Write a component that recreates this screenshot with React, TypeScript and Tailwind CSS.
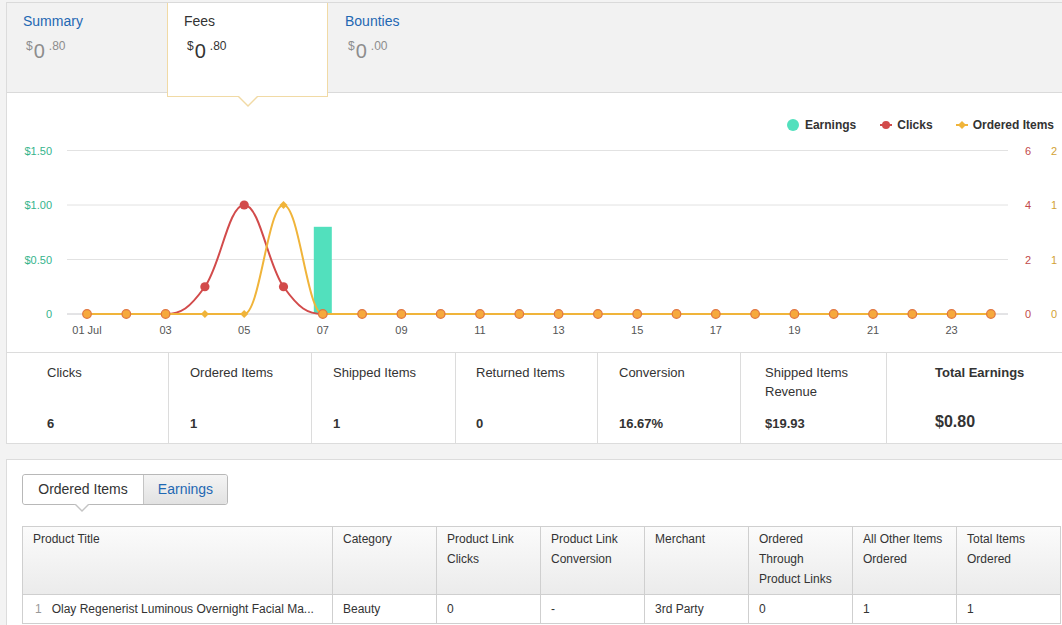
import React from 'react';

const clicks = [0, 0, 0, 1, 4, 1, 0, 0, 0, 0, 0, 0, 0, 0, 0, 0, 0, 0, 0, 0, 0, 0, 0, 0];
const ordered = [0, 0, 0, 0, 0, 1, 0, 0, 0, 0, 0, 0, 0, 0, 0, 0, 0, 0, 0, 0, 0, 0, 0, 0];
const X0 = 87;
const DX = 39.3;
const Y0 = 314;
const H = 163.5;
const xOf = (i: number) => X0 + i * DX;
const yClicks = (v: number) => Y0 - (v / 6) * H;
const yOrd = (v: number) => Y0 - (v / 1.5) * H;

type P = { x: number; y: number; rcx?: number; rcy?: number };

function spline(raw: [number, number][]) {
  const pts: P[] = raw.map(([x, y]) => ({ x, y }));
  const s = 1.5;
  const d = s + 1;
  let path = `M${pts[0].x},${pts[0].y}`;
  for (let i = 1; i < pts.length; i++) {
    const p = pts[i];
    const last = pts[i - 1];
    const next = pts[i + 1];
    let lcx = p.x;
    let lcy = p.y;
    if (next) {
      lcx = (s * p.x + last.x) / d;
      lcy = (s * p.y + last.y) / d;
      const rcx = (s * p.x + next.x) / d;
      let rcy = (s * p.y + next.y) / d;
      let corr = 0;
      if (rcx !== lcx) corr = ((rcy - lcy) * (rcx - p.x)) / (rcx - lcx) + p.y - rcy;
      lcy += corr;
      rcy += corr;
      if (lcy > last.y && lcy > p.y) {
        lcy = Math.max(last.y, p.y);
        rcy = 2 * p.y - lcy;
      } else if (lcy < last.y && lcy < p.y) {
        lcy = Math.min(last.y, p.y);
        rcy = 2 * p.y - lcy;
      }
      if (rcy > next.y && rcy > p.y) {
        rcy = Math.max(next.y, p.y);
        lcy = 2 * p.y - rcy;
      } else if (rcy < next.y && rcy < p.y) {
        rcy = Math.min(next.y, p.y);
        lcy = 2 * p.y - rcy;
      }
      p.rcx = rcx;
      p.rcy = rcy;
    }
    path += ` C${last.rcx ?? last.x},${last.rcy ?? last.y} ${lcx},${lcy} ${p.x},${p.y}`;
  }
  return path;
}

const RED = '#d24b4b';
const YEL = '#f0b43a';

function Diamond({ x, y, r = 4 }: { x: number; y: number; r?: number }) {
  return <polygon points={`${x},${y - r} ${x + r},${y} ${x},${y + r} ${x - r},${y}`} fill={YEL} />;
}

function Chart() {
  const redPath = spline(clicks.map((v, i) => [xOf(i), yClicks(v)]));
  const yelPath = spline(ordered.map((v, i) => [xOf(i), yOrd(v)]));
  const grid = [0, 1, 2, 3].map((k) => Y0 - (k * H) / 3);
  const leftLabels = ['0', '$0.50', '$1.00', '$1.50'];
  const redLabels = ['0', '2', '4', '6'];
  const yelLabels = ['0', '1', '1', '2'];
  return (
    <svg width={1055} height={212} viewBox="7 140 1055 212" className="block">
      {grid.map((y, k) => (
        <line key={k} x1={67} x2={1008} y1={y} y2={y} stroke={k === 0 ? '#c8c8cc' : '#e2e2e2'} strokeWidth={1} />
      ))}
      {grid.map((y, k) => (
        <text key={'l' + k} x={52} y={y + 4} textAnchor="end" fontSize={11} fill="#35b48c">
          {leftLabels[k]}
        </text>
      ))}
      {grid.map((y, k) => (
        <text key={'r' + k} x={1028} y={y + 4} textAnchor="middle" fontSize={11} fill="#c24a4a">
          {redLabels[k]}
        </text>
      ))}
      {grid.map((y, k) => (
        <text key={'y' + k} x={1051} y={y + 4} textAnchor="start" fontSize={11} fill="#d3a234">
          {yelLabels[k]}
        </text>
      ))}
      {clicks.map((_, i) =>
        i % 2 === 0 ? (
          <text key={'x' + i} x={xOf(i)} y={334} textAnchor="middle" fontSize={11} fill="#555">
            {i === 0 ? '01 Jul' : String(i + 1).padStart(2, '0')}
          </text>
        ) : null
      )}
      <rect x={xOf(6) - 9} y={yOrd(0.8)} width={18} height={Y0 - yOrd(0.8)} fill="#52e0bd" />
      <path d={redPath} fill="none" stroke={RED} strokeWidth={2} />
      <path d={yelPath} fill="none" stroke={YEL} strokeWidth={2} />
      {clicks.map((c, i) => {
        const o = ordered[i];
        const x = xOf(i);
        if (c === 0 && o === 0) {
          return <circle key={'m' + i} cx={x} cy={Y0} r={4.3} fill="#f6a93d" stroke="#e07640" strokeWidth={1.2} />;
        }
        return (
          <g key={'m' + i}>
            {c > 0 && <circle cx={x} cy={yClicks(c)} r={4.6} fill={RED} />}
            <Diamond x={x} y={yOrd(o)} />
          </g>
        );
      })}
    </svg>
  );
}

function Amount({ dim, cents }: { dim?: boolean; cents: string }) {
  const c = dim ? 'text-[#8d8d8d]' : 'text-[#333]';
  return (
    <div className={`flex items-start mt-[11px] ${c}`}>
      <span className="text-[12px] leading-[12px] mt-[0px] ml-[3px]">$</span>
      <span className="text-[20px] leading-[20px] mt-[1px] ml-[1px]">0</span>
      <span className="text-[12px] leading-[12px] ml-[4px]">{cents}</span>
    </div>
  );
}

function TabBar() {
  return (
    <div className="relative flex h-[91px] bg-[#f2f2f2] border-t border-b border-[#dadada]">
      <div className="w-[160px] pl-[16px] pt-[10px]">
        <div className="text-[14px] leading-[16px] text-[#1f68b3]">Summary</div>
        <Amount dim cents=".80" />
      </div>
      <div className="relative z-10 w-[161px] h-[94px] self-start bg-white border-x border-b border-[#f1daa5] pl-[16px] pt-[10px]">
        <div className="text-[14px] leading-[16px] text-[#333]">Fees</div>
        <Amount cents=".80" />
        <div className="absolute left-[69px] -bottom-[11px] w-0 h-0 border-x-[11px] border-x-transparent border-t-[11px] border-t-[#f1daa5]" />
        <div className="absolute left-[70px] -bottom-[9px] w-0 h-0 border-x-[10px] border-x-transparent border-t-[10px] border-t-white" />
      </div>
      <div className="w-[160px] pl-[17px] pt-[10px]">
        <div className="text-[14px] leading-[16px] text-[#1f68b3]">Bounties</div>
        <Amount dim cents=".00" />
      </div>
    </div>
  );
}

function Legend() {
  return (
    <div className="flex justify-end items-center h-[47px] pt-[16px] pr-[22px] text-[12px] font-bold text-[#333]">
      <div className="flex items-center">
        <span className="w-[12px] h-[12px] rounded-full bg-[#52e0bd] mr-[6px]" />
        <span>Earnings</span>
      </div>
      <div className="flex items-center ml-[23px]">
        <svg width="14" height="10" className="mr-[4px]">
          <line x1="1" x2="13" y1="5" y2="5" stroke={RED} strokeWidth="2" />
          <circle cx="7" cy="5" r="4" fill={RED} />
        </svg>
        <span>Clicks</span>
      </div>
      <div className="flex items-center ml-[22px]">
        <svg width="14" height="10" className="mr-[4px]">
          <line x1="1" x2="13" y1="5" y2="5" stroke={YEL} strokeWidth="2" />
          <polygon points="7,1 11,5 7,9 3,5" fill={YEL} />
        </svg>
        <span>Ordered Items</span>
      </div>
    </div>
  );
}

function Stats() {
  return (
    <div className="flex h-[92px] border-t border-b border-[#dcdcdc] text-[13px] text-[#333]">
      <div className="w-[162px] border-r border-[#dcdcdc] pl-[40px] pt-[10px] pb-[10px] flex flex-col">
        <div className="leading-[19px]">Clicks</div>
        <div className="mt-auto leading-[19px] font-bold">6</div>
      </div>
      <div className="w-[143px] border-r border-[#dcdcdc] pl-[21px] pt-[10px] pb-[10px] flex flex-col">
        <div className="leading-[19px]">Ordered Items</div>
        <div className="mt-auto leading-[19px] font-bold">1</div>
      </div>
      <div className="w-[144px] border-r border-[#dcdcdc] pl-[21px] pt-[10px] pb-[10px] flex flex-col">
        <div className="leading-[19px]">Shipped Items</div>
        <div className="mt-auto leading-[19px] font-bold">1</div>
      </div>
      <div className="w-[142px] border-r border-[#dcdcdc] pl-[20px] pt-[10px] pb-[10px] flex flex-col">
        <div className="leading-[19px]">Returned Items</div>
        <div className="mt-auto leading-[19px] font-bold">0</div>
      </div>
      <div className="w-[143px] border-r border-[#dcdcdc] pl-[21px] pt-[10px] pb-[10px] flex flex-col">
        <div className="leading-[19px]">Conversion</div>
        <div className="mt-auto leading-[19px] font-bold">16.67%</div>
      </div>
      <div className="w-[146px] border-r border-[#dcdcdc] pl-[24px] pr-[10px] pt-[10px] pb-[10px] flex flex-col">
        <div className="leading-[19px]">Shipped Items Revenue</div>
        <div className="mt-auto leading-[19px] font-bold">$19.93</div>
      </div>
      <div className="flex-1 pl-[48px] pt-[10px] pb-[12px] flex flex-col">
        <div className="leading-[19px] font-bold">Total Earnings</div>
        <div className="mt-auto leading-[19px] font-bold text-[16px]">$0.80</div>
      </div>
    </div>
  );
}

function Toggle() {
  return (
    <div className="relative flex h-[31px] w-[206px] border border-[#b8b8b8] rounded-[3px] text-[14px]">
      <div className="relative w-[120px] flex items-center justify-center bg-white rounded-l-[3px] text-[#333]">
        Ordered Items
        <div className="absolute left-[51px] -bottom-[8px] w-0 h-0 border-x-[8px] border-x-transparent border-t-[8px] border-t-[#c4c4c4]" />
        <div className="absolute left-[52px] -bottom-[6px] w-0 h-0 border-x-[7px] border-x-transparent border-t-[7px] border-t-white" />
      </div>
      <div className="flex-1 flex items-center justify-center border-l border-[#c4c4c4] bg-linear-to-b from-[#f4f4f4] to-[#e2e2e2] rounded-r-[3px] text-[#1f68b3]">
        Earnings
      </div>
    </div>
  );
}

function Table() {
  const th = 'align-top text-left font-normal pl-[10px] pr-[5px] pt-[2px] leading-[20px] border border-[#cfcfcf]';
  const td = 'h-[29px] pl-[10px] pr-[5px] leading-[16px] border border-[#cfcfcf] whitespace-nowrap';
  return (
    <table className="table-fixed border-collapse w-[1038px] text-[12px] text-[#333]">
      <colgroup>
        <col className="w-[310px]" />
        <col className="w-[104px]" />
        <col className="w-[104px]" />
        <col className="w-[104px]" />
        <col className="w-[104px]" />
        <col className="w-[104px]" />
        <col className="w-[104px]" />
        <col className="w-[104px]" />
      </colgroup>
      <thead>
        <tr className="h-[68px] bg-linear-to-b from-[#fbfbfb] to-[#ebebeb]">
          <th className={th}>Product Title</th>
          <th className={th}>Category</th>
          <th className={th}>Product Link Clicks</th>
          <th className={th}>Product Link Conversion</th>
          <th className={th}>Merchant</th>
          <th className={th}>Ordered Through Product Links</th>
          <th className={th}>All Other Items Ordered</th>
          <th className={th}>Total Items Ordered</th>
        </tr>
      </thead>
      <tbody>
        <tr className="bg-white">
          <td className={td}>
            <span className="text-[#999] mr-[10px] ml-[2px]">1</span>
            Olay Regenerist Luminous Overnight Facial Ma...
          </td>
          <td className={td}>Beauty</td>
          <td className={td}>0</td>
          <td className={td}>-</td>
          <td className={td}>3rd Party</td>
          <td className={td}>0</td>
          <td className={td}>1</td>
          <td className={td}>1</td>
        </tr>
      </tbody>
    </table>
  );
}

export default function App() {
  return (
    <div className="w-[1062px] h-[625px] overflow-hidden bg-[#f3f3f3] pt-[2px] pl-[6px] font-['Liberation_Sans',Arial,sans-serif]">
      <div className="bg-white border-l border-[#dcdcdc] w-[1070px]">
        <TabBar />
        <Legend />
        <Chart />
        <Stats />
      </div>
      <div className="mt-[15px] bg-white border-l border-t border-[#dcdcdc] w-[1070px] h-[200px] pl-[15px] pt-[14px]">
        <Toggle />
        <div className="h-[21px]" />
        <Table />
      </div>
    </div>
  );
}
